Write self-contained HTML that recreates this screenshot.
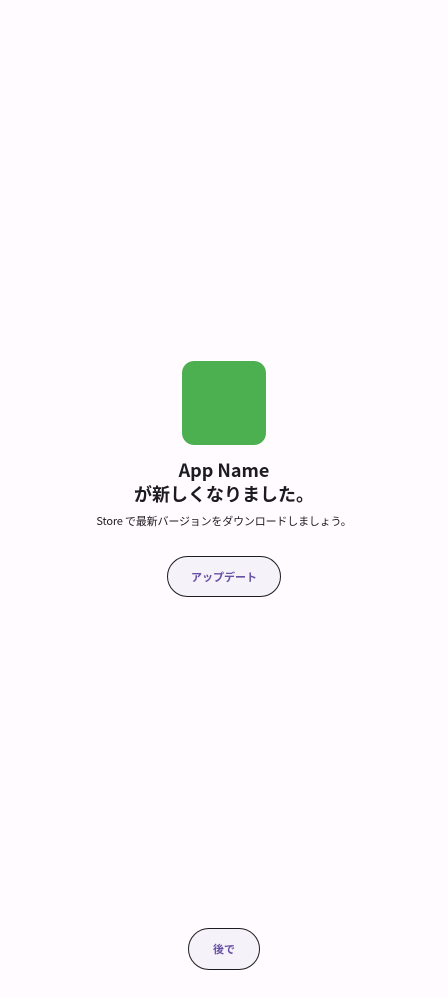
<!DOCTYPE html>
<html><head><meta charset="utf-8"><style>
body{margin:0;width:448px;height:998px;background:#fffbfe;font-family:"Liberation Sans","Noto Sans CJK JP",sans-serif;position:relative;overflow:hidden}
.icon{position:absolute;left:182px;top:361px;width:84px;height:84px;border-radius:12px;background:#4caf50}
.t{position:absolute;left:0;width:448px;text-align:center;color:#1c1b1f;font-weight:bold;font-size:18px;line-height:24px;font-family:"Noto Sans CJK JP",sans-serif}
.s{position:absolute;left:0;width:448px;top:513px;text-align:center;font-size:11px;line-height:16px;letter-spacing:-0.17px;color:#1c1b1f;font-family:"Noto Sans CJK JP",sans-serif}
.b{position:absolute;box-sizing:border-box;border:1.3px solid #1c1b1f;border-radius:22px;background:#f6f2f9;color:#6750a4;font-size:11px;font-weight:bold;display:flex;align-items:center;justify-content:center;font-family:"Noto Sans CJK JP",sans-serif}
</style></head><body>
<div class="icon"></div>
<div class="t" style="top:458px">App Name</div>
<div class="t" style="top:482px">が新しくなりました。</div>
<div class="s">Store で最新バージョンをダウンロードしましょう。</div>
<div class="b" style="left:167px;top:556px;width:114px;height:41px">アップデート</div>
<div class="b" style="left:188px;top:928px;width:72px;height:42px">後で</div>
</body></html>
